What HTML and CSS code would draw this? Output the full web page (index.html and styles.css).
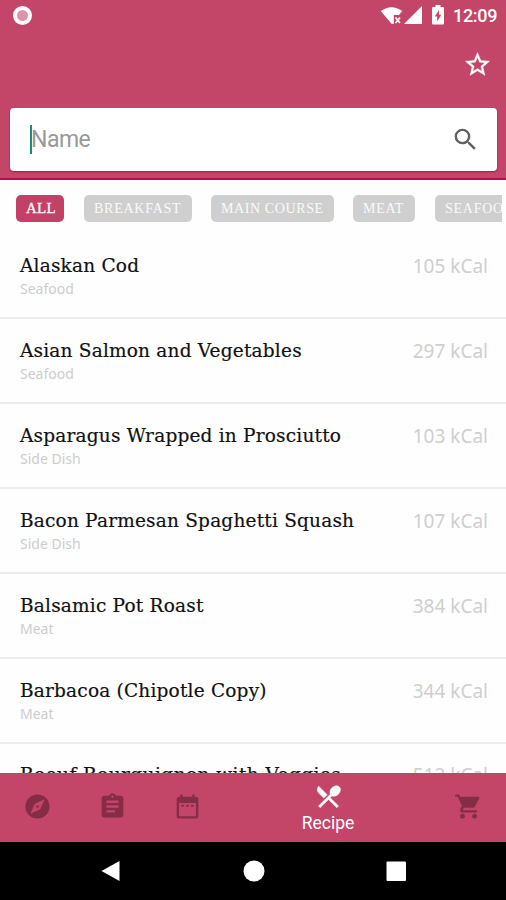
FILE: index.html
```html
<!DOCTYPE html>
<html lang="en">
<head>
<meta charset="utf-8">
<title>Recipes</title>
<link rel="stylesheet" href="styles.css">
</head>
<body>
<div class="app">
  <header class="header">
    <div class="status">
      <span class="record"></span>
      <div class="indicators">
        <svg class="wifi" width="24" height="20" viewBox="0 0 24 20"><path d="M.8 5Q11.5-2.6 22.3 5L19 9h-5.200v8.800L11.700 18z"/><path d="M15.500 11.500l4.500 5.500m0-5.500l-4.500 5.500" fill="none" stroke="#fff" stroke-width="1.700"/></svg>
        <svg class="signal" width="18" height="18" viewBox="0 0 18 18"><path d="M18 0v18H0z"/></svg>
        <svg class="battery" width="12" height="20" viewBox="0 0 12 20"><path d="M3.500 0h5v2H11q1 0 1 1v15.500q0 1-1 1H1q-1 0-1-1V3q0-1 1-1h2.500z"/><path class="bolt" d="M7 5L2.800 11.500h2.400V16.500L9.300 9.800H7z"/></svg>
        <span class="clock">12:09</span>
      </div>
    </div>
    <div class="actions">
      <svg class="star" viewBox="0 0 24 24"><path d="M22 9.240l-7.190-.62L12 2 9.190 8.630 2 9.240l5.460 4.730L5.820 21 12 17.270 18.180 21l-1.630-7.030L22 9.240zM12 15.400l-3.760 2.270 1-4.280-3.320-2.880 4.380-.38L12 6.100l1.710 4.040 4.380.38-3.320 2.880 1 4.280L12 15.400z"/></svg>
    </div>
    <div class="search">
      <span class="caret"></span><span class="placeholder">Name</span>
      <svg class="magnifier" viewBox="0 0 24 24"><path d="M15.500 14h-.79l-.28-.27A6.471 6.471 0 0 0 16 9.500 6.500 6.500 0 1 0 9.500 16c1.610 0 3.090-.59 4.230-1.570l.27.28v.79l5 4.990L20.490 19l-4.990-5zm-6 0C7.010 14 5 11.990 5 9.500S7.010 5 9.500 5 14 7.010 14 9.500 11.990 14 9.500 14z"/></svg>
    </div>
  </header>
  <nav class="chips">
    <span class="chip all">ALL</span>
    <span class="chip breakfast">BREAKFAST</span>
    <span class="chip main">MAIN COURSE</span>
    <span class="chip meat">MEAT</span>
    <span class="chip seafood">SEAFOOD</span>
  </nav>
  <main class="list">
    <article class="row"><div><h2>Alaskan Cod</h2><p>Seafood</p></div><span class="kcal">105 kCal</span></article>
    <article class="row"><div><h2>Asian Salmon and Vegetables</h2><p>Seafood</p></div><span class="kcal">297 kCal</span></article>
    <article class="row"><div><h2>Asparagus Wrapped in Prosciutto</h2><p>Side Dish</p></div><span class="kcal">103 kCal</span></article>
    <article class="row"><div><h2>Bacon Parmesan Spaghetti Squash</h2><p>Side Dish</p></div><span class="kcal">107 kCal</span></article>
    <article class="row"><div><h2>Balsamic Pot Roast</h2><p>Meat</p></div><span class="kcal">384 kCal</span></article>
    <article class="row"><div><h2>Barbacoa (Chipotle Copy)</h2><p>Meat</p></div><span class="kcal">344 kCal</span></article>
    <article class="row last"><div><h2>Boeuf Bourguignon with Veggies</h2></div><span class="kcal">512 kCal</span></article>
  </main>
  <nav class="tabs">
    <div class="tab"><svg viewBox="0 0 24 24"><path d="M12 10.900c-.61 0-1.100.49-1.100 1.100s.49 1.100 1.100 1.100 1.100-.49 1.100-1.100-.49-1.100-1.100-1.100zM12 2C6.480 2 2 6.480 2 12s4.480 10 10 10 10-4.480 10-10S17.520 2 12 2zm2.190 12.190L6 18l3.810-8.190L18 6l-3.810 8.190z"/></svg></div>
    <div class="tab"><svg viewBox="0 0 24 24"><path d="M19 3h-4.180C14.400 1.840 13.300 1 12 1s-2.400.84-2.820 2H5c-1.100 0-2 .9-2 2v14c0 1.100.9 2 2 2h14c1.100 0 2-.9 2-2V5c0-1.100-.9-2-2-2zm-7 0c.55 0 1 .45 1 1s-.45 1-1 1-1-.45-1-1 .45-1 1-1zm2 14H7v-2h7v2zm3-4H7v-2h10v2zm0-4H7V7h10v2z"/></svg></div>
    <div class="tab"><svg viewBox="0 0 24 24"><path d="M9 10.500H7v1.700h2v-1.700zm4 0h-2v1.700h2v-1.700zm4 0h-2v1.700h2v-1.700zm2-6.500h-1V2h-2v2H8V2H6v2H5c-1.110 0-1.990.9-1.990 2L3 20c0 1.100.89 2 2 2h14c1.100 0 2-.9 2-2V6c0-1.100-.9-2-2-2zm0 16H5V9h14v11z"/></svg></div>
    <div class="tab active"><svg viewBox="0 0 24 24"><path d="M8.100 13.340l2.830-2.830L3.910 3.500a4.008 4.008 0 0 0 0 5.660l4.190 4.180zm6.780-1.810c1.530.71 3.680.21 5.270-1.380 1.910-1.910 2.280-4.650.81-6.120-1.460-1.460-4.200-1.100-6.120.81-1.590 1.590-2.090 3.740-1.380 5.270L3.700 19.870l1.410 1.410L12 14.410l6.880 6.880 1.410-1.410L13.410 13l1.470-1.470z"/></svg><span>Recipe</span></div>
    <div class="tab cart"><svg viewBox="0 0 24 24"><path d="M7 18c-1.100 0-1.990.9-1.990 2S5.900 22 7 22s2-.9 2-2-.9-2-2-2zM1 2v2h2l3.600 7.590-1.350 2.450c-.16.28-.25.61-.25.96 0 1.100.9 2 2 2h12v-2H7.420c-.14 0-.25-.11-.25-.25l.03-.12.9-1.630h7.450c.75 0 1.410-.41 1.750-1.030l3.580-6.490A1 1 0 0 0 20 4H5.210l-.94-2H1zm16 16c-1.100 0-1.990.9-1.990 2s.89 2 1.990 2 2-.9 2-2-.9-2-2-2z"/></svg></div>
  </nav>
  <footer class="system">
    <svg viewBox="0 0 22 22"><path d="M19.500 1v20L1.500 11z"/></svg>
    <svg viewBox="0 0 22 22"><circle cx="11" cy="11" r="10.500"/></svg>
    <svg viewBox="0 0 22 22"><rect x="1.500" y="1.500" width="19.500" height="19.500" rx="1"/></svg>
  </footer>
</div>
</body>
</html>
```
FILE: styles.css
```css
* { box-sizing: border-box; }
body { margin: 0; background: #fefefe; }
svg { display: block; fill: #fff; flex: none; }
h2, p { margin: 0; }
.app { width: 506px; height: 900px; display: flex; flex-direction: column; overflow: hidden; font-family: Roboto, sans-serif; }
.header { height: 180px; flex: none; background: #c34668; border-bottom: 2px solid #b90b55; }
.status { height: 32px; display: flex; justify-content: space-between; padding: 0 9px 0 13px; }
.record { width: 19px; height: 19px; margin-top: 6px; border: 4px solid #fff; border-radius: 50%; background: #df92a8; }
.indicators { display: flex; align-items: flex-start; }
.wifi { margin-top: 6px; }
.signal { margin: 6px 10px 0 0; }
.battery { margin: 5px 9px 0 0; }
.bolt { fill: #c34668; }
.clock { color: #fff; font-size: 18px; line-height: 32px; font-weight: 500; width: 44px; white-space: nowrap; letter-spacing: -.3px; }
.actions { height: 76px; display: flex; justify-content: flex-end; padding: 18px 14.500px 0 0; }
.star { width: 29px; height: 29px; stroke: #fff; stroke-width: .3; }
.search { height: 63px; margin: 0 9px 0 10px; padding: 0 17px 0 20px; display: flex; align-items: center; background: #fff; border-radius: 4px; box-shadow: 0 1px 2px #a91643; }
.caret { width: 2px; height: 29px; background: #16907e; margin-right: -2px; }
.placeholder { flex: 1; font-size: 23px; letter-spacing: -.5px; padding-left: 1px; color: #999; }
.magnifier { width: 29px; height: 29px; fill: #616161; }
.chips { height: 54px; flex: none; margin-right: 4px; padding: 15px 0 0 16px; display: flex; overflow: hidden; }
.chip { flex: none; height: 27px; line-height: 27px; border-radius: 5px; background: #cfcfcf; color: #fafafa; font-family: "Liberation Serif", serif; font-size: 14px; letter-spacing: .75px; padding-left: 10px; margin-right: 20px; white-space: nowrap; }
.all { width: 48px; background: #c34067; font-size: 15px; letter-spacing: .2px; -webkit-text-stroke: .3px #fff; }
.breakfast { width: 108px; margin-right: 19px; }
.main { width: 123px; margin-right: 19px; letter-spacing: .6px; }
.meat { width: 62px; }
.seafood { width: 87px; }
.list { flex: 1; min-height: 0; overflow: hidden; }
.row { height: 85px; border-bottom: 2px solid #ececec; padding: 18px 18px 0 20px; display: flex; justify-content: space-between; }
.row h2 { font-family: "DejaVu Serif", serif; font-weight: 400; font-size: 18.500px; line-height: 27px; letter-spacing: .2px; color: #111; -webkit-text-stroke: .2px #111; white-space: nowrap; }
.row p { font-family: "Noto Sans", sans-serif; font-size: 14px; line-height: 20px; color: #cdcdcd; }
.row.last { padding-top: 17px; }
.row.last h2 { letter-spacing: .45px; }
.kcal { font-family: "Noto Sans", sans-serif; font-size: 19px; line-height: 28px; color: #cfcfcf; white-space: nowrap; }
.tabs { height: 69px; flex: none; display: grid; grid-template-columns: 75px 75px 75px 206px 75px; background: #c34668; }
.tab { display: flex; flex-direction: column; align-items: center; padding-top: 19px; }
.tab svg { width: 29px; height: 29px; fill: #852c47; }
.tab.active { padding-top: 9px; color: #fff; font-size: 17.500px; line-height: 24px; }
.tab.active svg { fill: #fff; stroke: #fff; stroke-width: .4; }
.system { height: 58px; flex: none; background: #000; display: flex; justify-content: center; gap: 120.500px; padding: 18px 0 0 1px; }
.system svg { width: 22px; height: 22px; }
```
